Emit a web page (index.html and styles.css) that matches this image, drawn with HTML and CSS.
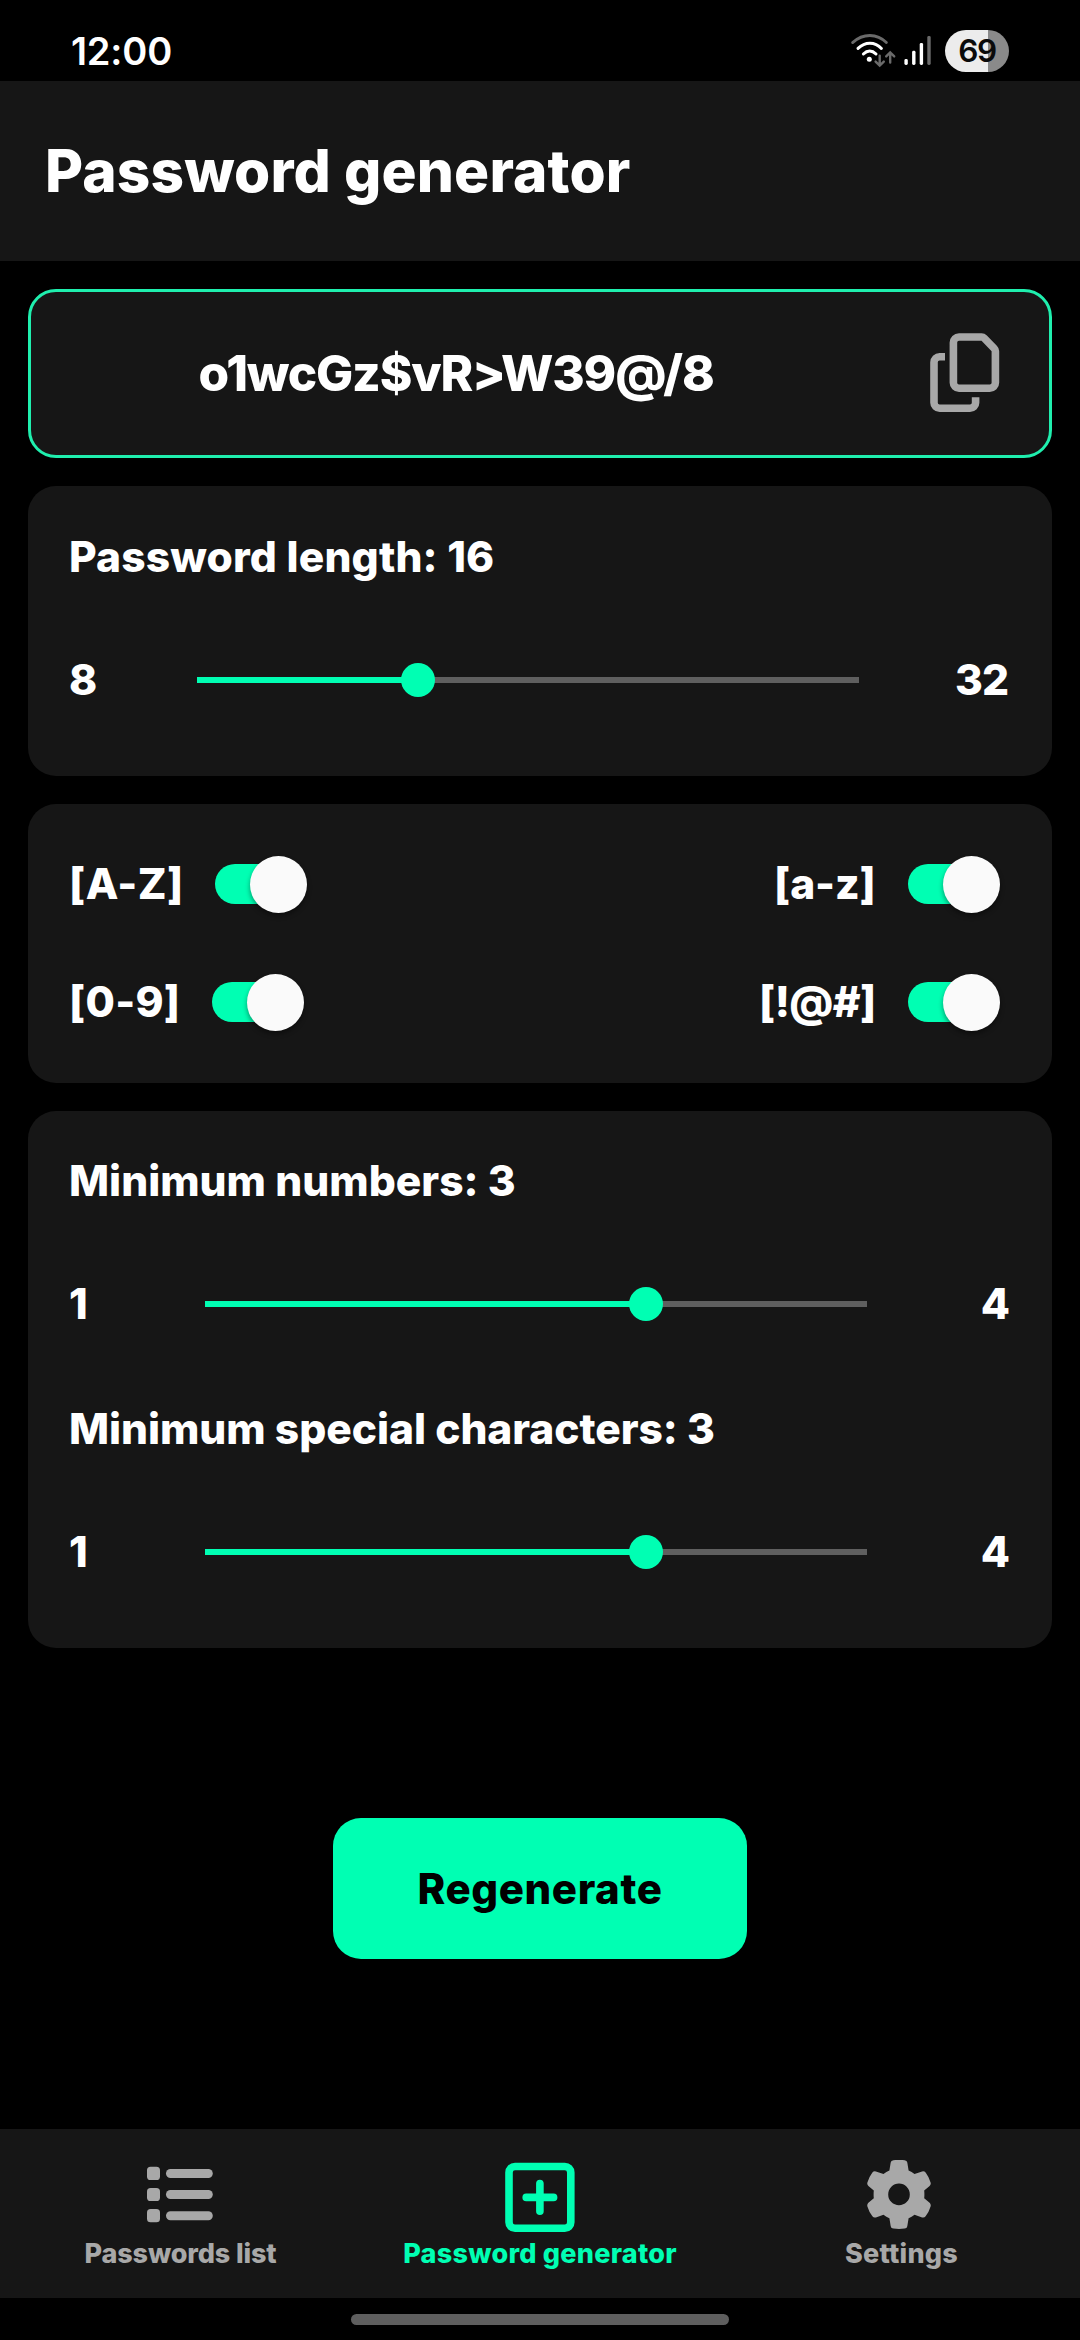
FILE: index.html
```html
<!DOCTYPE html>
<html lang="en">
<head>
<meta charset="utf-8">
<title>Password generator</title>
<link rel="stylesheet" href="styles.css">
</head>
<body>
<div class="status-bar">
  <span class="clock">12:00</span>
  <div class="status-icons">
    <svg class="wifi" width="46" height="36" viewBox="0 0 46 36" fill="none" stroke-linecap="round">
      <path d="M2.6 10.6C13 1.1 27 1.1 36.4 10.6" stroke="#6a6a6a" stroke-width="2.8"/>
      <path d="M8 16.4C15 9.4 25 9.4 31.4 16.4" stroke="#fff" stroke-width="3"/>
      <path d="M13.4 22C17.4 18 22 18 26 22" stroke="#fff" stroke-width="3"/>
      <circle cx="19.3" cy="27.3" r="2.5" fill="#fff"/>
      <path d="M29.7 23.6V33M25.6 29.6l4.1 4 4.1-4M40.2 30.6V21M36.2 24.4l4-4 4 4" stroke="#6a6a6a" stroke-width="2.4"/>
    </svg>
    <svg class="signal" width="28" height="30" viewBox="0 0 28 30">
      <rect x="0.4" y="23" width="3.4" height="6" rx="1.4" fill="#fff"/>
      <rect x="8.1" y="14.8" width="3.4" height="14.2" rx="1.4" fill="#fff"/>
      <rect x="15.7" y="7" width="3.4" height="22" rx="1.4" fill="#fff"/>
      <rect x="23.3" y="0" width="3.4" height="29" rx="1.4" fill="#6a6a6a"/>
    </svg>
    <div class="battery">69</div>
  </div>
</div>

<header class="app-header"><h1 class="title">Password generator</h1></header>

<main class="content">
  <section class="card password-card">
    <div class="password">o1wcGz$vR&gt;W39@/8</div>
    <svg class="copy-icon" width="70" height="80" viewBox="0 0 70 80" fill="none" stroke="#a8a8a8" stroke-width="7.6">
      <path d="M29 4h22.6c1.2 0 1.8.3 2.6 1.1l9.9 10.2c.9.9 1.3 1.6 1.3 2.8v31.6a5.6 5.6 0 0 1-5.6 5.6H29a5.6 5.6 0 0 1-5.6-5.6V9.6A5.6 5.6 0 0 1 29 4z"/>
      <path d="M15 23.7H9.6a5.6 5.6 0 0 0-5.6 5.6v40.4a5.6 5.6 0 0 0 5.6 5.6h30.4a5.6 5.6 0 0 0 5.6-5.6V64.2"/>
    </svg>
  </section>

  <section class="card length-card">
    <div class="label label-length">Password length: 16</div>
    <div class="slider-row slider-row-length">
      <span class="bound">8</span>
      <div class="slider"><div class="fill" style="width:33.333%"></div></div>
      <span class="bound bound-max">32</span>
    </div>
  </section>

  <section class="card toggles-card">
    <div class="option"><span class="charset charset-upper">[A-Z]</span><div class="toggle"></div></div>
    <div class="option option-end"><span class="charset charset-lower">[a-z]</span><div class="toggle"></div></div>
    <div class="option"><span class="charset charset-digits">[0-9]</span><div class="toggle"></div></div>
    <div class="option option-end"><span class="charset charset-symbols">[!@#]</span><div class="toggle"></div></div>
  </section>

  <section class="card minimum-card">
    <div class="setting">
      <div class="label label-numbers">Minimum numbers: 3</div>
      <div class="slider-row">
        <span class="bound">1</span>
        <div class="slider"><div class="fill" style="width:66.667%"></div></div>
        <span class="bound bound-max">4</span>
      </div>
    </div>
    <div class="setting">
      <div class="label label-special">Minimum special characters: 3</div>
      <div class="slider-row">
        <span class="bound">1</span>
        <div class="slider"><div class="fill" style="width:66.667%"></div></div>
        <span class="bound bound-max">4</span>
      </div>
    </div>
  </section>

  <button class="regenerate">Regenerate</button>
</main>

<nav class="tabs">
  <div class="tab">
    <svg width="70" height="70" viewBox="0 0 70 70" fill="currentColor">
      <rect x="2" y="6.7" width="13" height="13.3" rx="3.6"/><rect x="21" y="9" width="46.8" height="9" rx="4.5"/>
      <rect x="2" y="28" width="13" height="13" rx="3.6"/><rect x="21" y="30" width="46.8" height="9" rx="4.5"/>
      <rect x="2" y="49" width="13" height="13.3" rx="3.6"/><rect x="21" y="51.2" width="46.8" height="9" rx="4.5"/>
    </svg>
    <span class="tab-label tab-list">Passwords list</span>
  </div>
  <div class="tab tab-active">
    <svg width="70" height="75" viewBox="0 0 70 75" fill="none" stroke="currentColor" stroke-width="7.6" stroke-linecap="round">
      <rect x="4" y="6.5" width="61.8" height="61.8" rx="6"/>
      <path d="M21.2 37.4h27.4M34.9 23.5v27.8"/>
    </svg>
    <span class="tab-label tab-generator">Password generator</span>
  </div>
  <div class="tab">
    <svg width="70" height="70" viewBox="-34 -34.4 70 70" fill="currentColor">
      <path fill-rule="evenodd" d="M-5.6-34.2Q0-34.9 5.6-34.2Q8-33.9 8.3-31.8L9.6-23.8Q12.7-22.4 15.5-20.3L23.1-23Q25.2-23.7 26.6-21.9Q30-17.4 31.6-12Q32.2-10 30.6-8.4L25.2-3.8Q25.6 0 25.2 3.8L30.6 8.4Q32.2 10 31.6 12Q30 17.4 26.6 21.9Q25.2 23.7 23.1 23L15.5 20.3Q12.7 22.4 9.6 23.8L8.3 31.8Q8 33.9 5.6 34.2Q0 34.9-5.6 34.2Q-8 33.9-8.3 31.8L-9.6 23.8Q-12.7 22.4-15.5 20.3L-23.1 23Q-25.2 23.7-26.6 21.9Q-30 17.4-31.6 12Q-32.2 10-30.6 8.4L-25.2 3.8Q-25.6 0-25.2-3.8L-30.6-8.4Q-32.2-10-31.6-12Q-30-17.4-26.6-21.9Q-25.2-23.7-23.1-23L-15.5-20.3Q-12.7-22.4-9.6-23.8L-8.3-31.8Q-8-33.9-5.6-34.2zM0-10.8a10.8 10.8 0 1 0 0 21.6a10.8 10.8 0 1 0 0-21.6z"/>
    </svg>
    <span class="tab-label tab-settings">Settings</span>
  </div>
</nav>
<div class="gesture-area"><div class="gesture-bar"></div></div>
</body>
</html>
```
FILE: styles.css
```css
* { box-sizing: border-box; }

body {
  margin: 0;
  width: 1080px;
  height: 2340px;
  display: flex;
  flex-direction: column;
  overflow: hidden;
  background: #000;
  color: #fff;
  font-family: "Inter", "Liberation Sans", sans-serif;
  font-weight: 800;
  white-space: nowrap;
}

svg { display: block; flex: none; }

/* Status bar */
.status-bar {
  height: 81px;
  flex: none;
  display: flex;
  justify-content: space-between;
  padding: 0 71px 0 71px;
}
.clock {
  padding-top: 31px;
  font-size: 38px;
  line-height: 40px;
  font-weight: 600;
  letter-spacing: -0.2px;
}
.status-icons { display: flex; }
.wifi { margin: 32px 8px 0 0; }
.signal { margin: 36px 13px 0 0; }
.battery {
  width: 64px;
  height: 42px;
  margin-top: 30px;
  border-radius: 21px;
  background: linear-gradient(90deg, #ececec 43px, #8a8a8a 43px);
  color: #0a0a0a;
  font-size: 31.5px;
  font-weight: 600;
  line-height: 41px;
  letter-spacing: -1.4px;
  text-align: center;
}

/* Header */
.app-header {
  height: 180px;
  flex: none;
  display: flex;
  align-items: center;
  padding: 0 45px;
  background: #161616;
}
.title {
  margin: 0;
  font-size: 58.5px;
  font-weight: 800;
  line-height: 70px;
  letter-spacing: 0.15px;
}

/* Cards */
.content {
  flex: 1;
  display: flex;
  flex-direction: column;
  gap: 28px;
  padding: 28px;
}
.card {
  flex: none;
  border-radius: 28px;
  background: #161616;
}
.password-card {
  height: 169px;
  display: flex;
  align-items: center;
  border: 3px solid #1fefae;
  padding: 0 49px 2px 56px;
}
.password {
  flex: 1;
  padding-right: 105px;
  text-align: center;
  font-size: 49.5px;
  line-height: 60px;
  letter-spacing: -1.2px;
}
.length-card { height: 290px; padding: 46px 44px 0 41px; }
.label { font-size: 42.5px; line-height: 50px; }
.label-length { letter-spacing: 0.15px; }
.label-numbers { letter-spacing: 0; }
.label-special { letter-spacing: -0.05px; }

/* Sliders */
.slider-row {
  display: grid;
  grid-template-columns: 136px 662px 1fr;
  align-items: center;
  height: 60px;
  margin-top: 68px;
}
.slider-row-length { grid-template-columns: 128px 662px 1fr; height: 58px; }
.bound { font-size: 42.5px; line-height: 60px; letter-spacing: -1px; }
.bound-max { text-align: right; }
.slider { height: 6px; background: #5f5f5f; }
.fill { position: relative; height: 6px; background: #00ffb3; }
.fill::after {
  content: "";
  position: absolute;
  right: -17px;
  top: -14px;
  width: 34px;
  height: 34px;
  border-radius: 50%;
  background: #00ffb3;
}

/* Character set switches */
.toggles-card {
  height: 279px;
  display: grid;
  grid-template-columns: 1fr 1fr;
  grid-template-rows: 118px 118px;
  padding: 21px 52px 0 41px;
}
.option { display: flex; align-items: center; }
.option-end { justify-content: flex-end; }
.charset { font-size: 42.5px; line-height: 50px; }
.charset-upper { width: 146px; letter-spacing: 0.4px; }
.charset-digits { width: 143px; letter-spacing: 0.25px; }
.charset-lower { width: 134px; letter-spacing: -0.1px; }
.charset-symbols { width: 149px; letter-spacing: -0.6px; }
.toggle {
  position: relative;
  width: 92px;
  height: 58px;
  flex: none;
}
.toggle::before {
  content: "";
  position: absolute;
  left: 0;
  top: 9px;
  width: 80px;
  height: 40px;
  border-radius: 20px;
  background: #00ffb3;
}
.toggle::after {
  content: "";
  position: absolute;
  right: 0;
  top: 0.5px;
  width: 57px;
  height: 57px;
  border-radius: 50%;
  background: #fafafa;
  box-shadow: 0 3px 5px rgba(0, 0, 0, 0.4);
}

.minimum-card {
  height: 536.5px;
  display: flex;
  flex-direction: column;
  gap: 69.5px;
  padding: 45px 43px 0 41px;
}

.regenerate {
  width: 414px;
  height: 141px;
  flex: none;
  align-self: center;
  margin-top: 142.5px;
  padding: 0;
  border: 0;
  border-radius: 28px;
  background: #00ffb3;
  color: #000;
  font: 800 42px/50px "Inter", "Liberation Sans", sans-serif;
  letter-spacing: 0.6px;
}

/* Bottom navigation */
.tabs {
  height: 169px;
  flex: none;
  display: grid;
  grid-template-columns: repeat(3, 360px);
  background: #161616;
}
.tab {
  display: grid;
  grid-template-rows: 108px 32px;
  justify-items: center;
  align-content: start;
  color: #a8a8a8;
}
.tab svg { margin-top: 31px; }
.tab-active { color: #00ffb3; }
.tab-label { font-size: 27px; line-height: 33px; }
.tab-list { padding-left: 1px; letter-spacing: -0.15px; }
.tab-generator { letter-spacing: 0.25px; }
.tab-settings { padding-left: 3px; letter-spacing: 0.25px; }

.gesture-area {
  height: 42px;
  flex: none;
  padding-top: 16px;
}
.gesture-bar {
  width: 378px;
  height: 11px;
  margin: 0 auto;
  border-radius: 6px;
  background: #5e5e5e;
}
```
